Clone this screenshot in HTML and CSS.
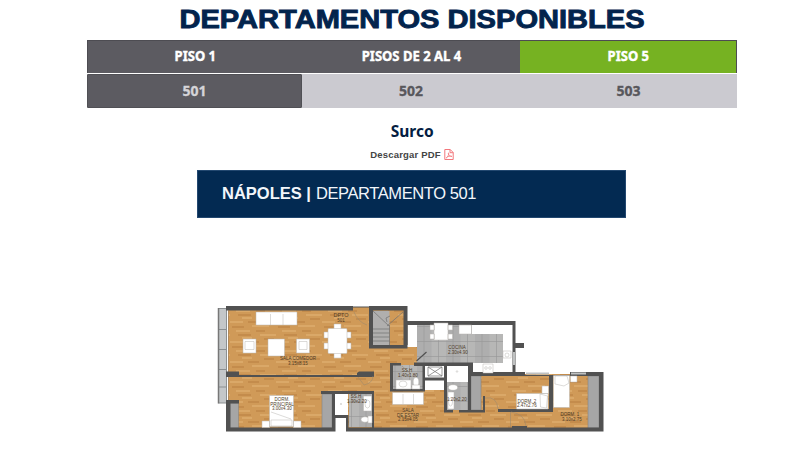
FILE: index.html
```html
<!DOCTYPE html>
<html lang="es">
<head>
<meta charset="utf-8">
<title>Departamentos disponibles</title>
<link rel="stylesheet" href="styles.css">
</head>
<body>
<main class="page">
  <h1 class="title"><span>DEPARTAMENTOS DISPONIBLES</span></h1>
  <nav class="tabs floors">
    <a class="tab"><span>PISO 1</span></a>
    <a class="tab"><span>PISOS DE 2 AL 4</span></a>
    <a class="tab current"><span>PISO 5</span></a>
  </nav>
  <nav class="tabs units">
    <a class="tab current"><span>501</span></a>
    <a class="tab"><span>502</span></a>
    <a class="tab"><span>503</span></a>
  </nav>
  <h2 class="district">Surco</h2>
  <a class="download"><span>Descargar PDF</span>
    <svg class="pdf" viewBox="0 0 10 11" fill="none" stroke="#f2777c" stroke-width="1"><path d="M.8.5h5.4l3 3v7H.8zM6 .5v3.2h3.2"/><path stroke-width=".8" d="M2.2 9c2-1.500 3-4 2.400-5.200C3.700 5 5.500 7.500 8 7.400 6 6.700 3.500 7.400 2.200 9z"/></svg>
  </a>
  <section class="banner"><b>NÁPOLES |</b><span>DEPARTAMENTO 501</span></section>
  <svg class="plan" viewBox="216 302 392 134">
    <defs>
      <pattern id="wood" width="46" height="20" patternUnits="userSpaceOnUse">
        <rect width="46" height="20" fill="#d09a58"/>
        <path stroke="#daa868" stroke-width="2" d="M0 2h13M22 6h17M6 11h14M30 15h16M12 18h10"/>
        <path stroke="#c48c4c" stroke-width="2" d="M18 2h11M2 7h12M26 11h9M8 15h13M34 19h10"/>
      </pattern>
      <pattern id="tile" width="29" height="15" patternUnits="userSpaceOnUse" patternTransform="translate(11 4)">
        <rect width="29" height="15" fill="#b7b7b6"/><path fill="#aeaeae" d="M0 0h14.500v15H0z"/>
        <path d="M0 7.500h29M7 0v15M21.500 0v15" stroke="#969696" stroke-width=".6"/>
      </pattern>
    </defs>
    <path fill="url(#wood)" d="M227 307H407V347H418V364H471V374H601V430H348V417H335V430H228V307z"/>
    <path class="glass" d="M218.500 308.500H226.500V403H218.500zM218.500 329.500h8M218.500 349.500h8M218.500 369.500h8M218.500 387h8"/>
    <path d="M218.500 308V403.500" stroke="#777" stroke-width="1.500"/>
    <path d="M228.500 311V400" stroke="#a5855f" stroke-width=".8"/>

    <!-- floors other than wood -->
    <path fill="url(#tile)" d="M417 325h86v38h-86zM349 394h23v33h-23zM393 365h30v24h-30zM447 382h21v28h-21z"/>
    <path fill="#fff" d="M407 325h9.500v20H407zM459 325h54v48h-42v-10h32v-29h-44zM335 394h13v21h-13zM425 365h19v25h-19zM447 365h21v17h-21z"/>
    <path class="closet" d="M229 403h9.500v25H229zM322 394h10v34h-10zM471 376h10v34h-10zM588 376h11v52h-11z"/>
    <path fill="#b0afae" d="M373 311h16.500v34H373z"/>
    <path class="thin" d="M373 329h16.500M373 333h16.500M373 337h16.500M373 341h16.500M373 311l16 15M403 312l-16 14M389.500 325v20M386 318l4-2M386 318l1 4M428 367l14 9M442 367l-14 9M428 367h14v9h-14zM471.500 325v9"/>

    <!-- walls -->
    <path fill="#515151" d="M226 306H353V310.500H226zM369 306H407.500V321H515.500V343H524V348H515.500V376H471V366H414V362.500H473V373H512.500V325H407.500V348.500H369V345H403.500V310.500H373V345H369z"/>
    <path fill="#515151" d="M226 371.500h13V375h118v-2l2-1.500H374V377H226zM226 400h13v3.500h-8.500V427.500H332V394h-11v-3H374V427.500H599V376H471V372H525V375H570V372H603.500V431.500H346V418h-10.500v13.500H226zM335 394v21h13.500v12.500H372V394z" fill-rule="evenodd"/>
    <path fill="#515151" d="M390 363h3v26h29.500v-24h2.500v26.500H390zM393 363h8v2.500h-8zM425 377.500h19V366h3v44h6v2.500h-9v-32h-19zM468 364h3v46h12v-14h2v16.500h-26V410h9zM549 375h4v37h-55v-3h51zM512 426h15v2h-15z"/>
    <path stroke="#bfc1c1" stroke-width="2" d="M526 373.500h23M571 373.500h15M514 352v13"/>
    <path stroke="#515151" stroke-width="1.200" d="M416.500 361l10-9M407 325v20M353 307h16"/>
    <path class="door" d="M354 312q4 10 13 13M485 398q12-2 13 11M511 412q14 2 15 14M358 377l6 8q9-2 9-9M402 366l9 8M510.500 412v15"/>

    <!-- furniture -->
    <g class="furniture">
      <path d="M256 312h41v13h-41zM270.500 314v11M283 314v11M243 339h13v14h-13zM245 341.500h9v8h-9zM268 339h16.500v17H268zM296.500 339h13v14h-13zM299 341.500h8v8h-8z"/>
      <path d="M334 324h7v34h-7zM324 332h5v6h-5zM324 343h5v6h-5zM346 332h5v6h-5zM346 343h5v6h-5z"/><rect x="328" y="328.500" width="19" height="25" rx="1"/>
      <path d="M434 323h14v17h-14zM430 325h4.500v5H430zM430 334h4.500v5H430zM448 325h4.500v5H448zM448 334h4.500v5H448zM459 325h12.500v9H459zM503 351h8v7h-8zM483 364h10v9h-10z"/>
      <path d="M269.500 395.500h24v31h-24zM262 421h7.500v6.500H262zM293.500 421h7.500v6.500h-7.500zM271 420h21v6h-21zM271 412l20 7M392.500 392.500h31v12h-31zM403 394v10M413.500 394v10"/>
      <path d="M516.500 393.500h31.500v15.500h-31.500zM540 394l7.500 2-1 12-6-1zM542 386h6.500v7.500H542zM553.500 375.500h16v32h-16zM555 376h12l2 7-5 3-9-2zM570.500 376h6.500v6h-6.500z"/>
      <path d="M363.500 396h8v15h-8zM396 380h15v9h-15zM448 392h6v17h-6z"/>
      <ellipse cx="367.500" cy="404" rx="2.500" ry="4"/><ellipse cx="365" cy="419.500" rx="4" ry="2.800"/><path d="M368 416h4v7h-4z"/>
      <ellipse cx="403" cy="384" rx="4" ry="3"/><ellipse cx="416" cy="382" rx="2.800" ry="4.500"/><path d="M412 385h8v4h-8z"/>
      <ellipse cx="453" cy="387.500" rx="4.500" ry="2.800"/><ellipse cx="450.500" cy="402" rx="2" ry="4"/><circle cx="457" cy="371.500" r=".8"/><circle cx="507" cy="355" r="2"/><circle cx="341" cy="404" r=".7"/>
      <circle cx="486" cy="368" r="1.300"/><circle cx="490" cy="368" r="1.300"/>
    </g>
    <g class="labels">
      <text x="341" y="317" class="big">DPTO</text><text x="341" y="322">501</text>
      <text x="298" y="360">SALA COMEDOR</text><text x="298" y="365">3.15x8.15</text>
      <text x="282" y="401">DORM.</text><text x="282" y="405.500">PRINCIPAL</text><text x="282" y="410">3.00x4.30</text>
      <text x="457" y="349">COCINA</text><text x="458" y="353.500">2.30x4.90</text>
      <text x="407" y="372">SS.H</text><text x="408" y="376.500">1.40x1.80</text>
      <text x="408" y="412">SALA</text><text x="408" y="416.500">DE ESTAR</text><text x="408" y="421">2.15x4.05</text>
      <text x="527" y="403">DORM. 2</text><text x="527" y="407">2.47x2.76</text>
      <text x="570" y="416">DORM. 1</text><text x="572" y="420.500">3.10x2.75</text>
      <text x="356" y="398">SS.H</text><text x="357" y="402.500">1.30x2.20</text><text x="457" y="401">1.20x2.20</text>
    </g>
  </svg>
</main>
</body>
</html>
```
FILE: styles.css
```css
* { box-sizing: border-box; }
body {
  margin: 0;
  background: #fff;
  font-family: "Liberation Sans", Arial, sans-serif;
}
.page {
  width: 800px;
  height: 450px;
  overflow: hidden;
  padding-top: 4px;
  display: flex;
  flex-direction: column;
  align-items: center;
}
.title {
  margin: 0 0 6px 24px;
  height: 30px;
  font-size: 25.5px;
  line-height: 30px;
  font-weight: 700;
  color: #03244d;
  -webkit-text-stroke: .9px #03244d;
  white-space: nowrap;
}
.title span { display: inline-block; transform: scaleX(1.14); }
.tabs {
  display: grid;
  grid-template-columns: 215px 218px 217px;
  width: 650px;
  margin-left: 24px;
  font-family: "Noto Sans", sans-serif;
  font-weight: 700;
  font-size: 14px;
}
.tab { display: flex; align-items: center; justify-content: center; padding-bottom: 3px; }
.tab span { white-space: nowrap; }
.floors { height: 33px; border: 1px solid #4d4c52; border-bottom: 0; background: #5c5b61; color: #fff; grid-template-columns: 214px 218px 216px; }
.floors span { transform: scaleX(.93); -webkit-text-stroke: .4px #fff; }
.floors .current { background: #76b222; }
.units { height: 34px; margin-top: 1px; background: #cbcad0; color: #58575c; }
.units .tab { padding-bottom: 2px; }
.units span { -webkit-text-stroke: .3px currentColor; }
.units .current { background: #5c5b61; color: #d5d4d8; border: 1px solid #505055; border-radius: 1px; }
.district {
  margin: 12px 0 0 24px;
  font: 700 16px/22px "Noto Sans", sans-serif;
  color: #041d42;
}
.district { transform: scaleX(.97); }
.download {
  margin: 5px 0 0 24px;
  height: 15px;
  display: flex;
  align-items: center;
  gap: 3px;
  font-size: 9.5px;
  letter-spacing: .2px;
  font-weight: 700;
  color: #444;
}
.pdf { width: 10px; height: 11px; }
.banner {
  width: 429px;
  height: 48px;
  margin: 8px 0 0 23px;
  padding: 0 0 1px 24px;
  display: flex;
  align-items: center;
  gap: 5px;
  background: #032a52;
  border: 1px solid #234870;
  color: #f2f6fb;
  font-size: 16.5px;
  white-space: nowrap;
}
.banner span { letter-spacing: -.4px; }
.plan { width: 392px; height: 134px; margin: 84px 0 0 24px; flex: none; }
.glass { fill: #c4c7c9; stroke: #8b8f91; stroke-width: 1; }
.closet { fill: #a6a6a6; stroke: #858585; stroke-width: .6; }
.thin { fill: none; stroke: #707070; stroke-width: .7; }
.door { fill: none; stroke: #9f8a6c; stroke-width: .6; }
.furniture { fill: #fff; stroke: #b9b7b3; stroke-width: .5; }
.labels { font-size: 4.500px; fill: #4d3b28; text-anchor: middle; }
.labels .big { font-size: 5.500px; }
```
